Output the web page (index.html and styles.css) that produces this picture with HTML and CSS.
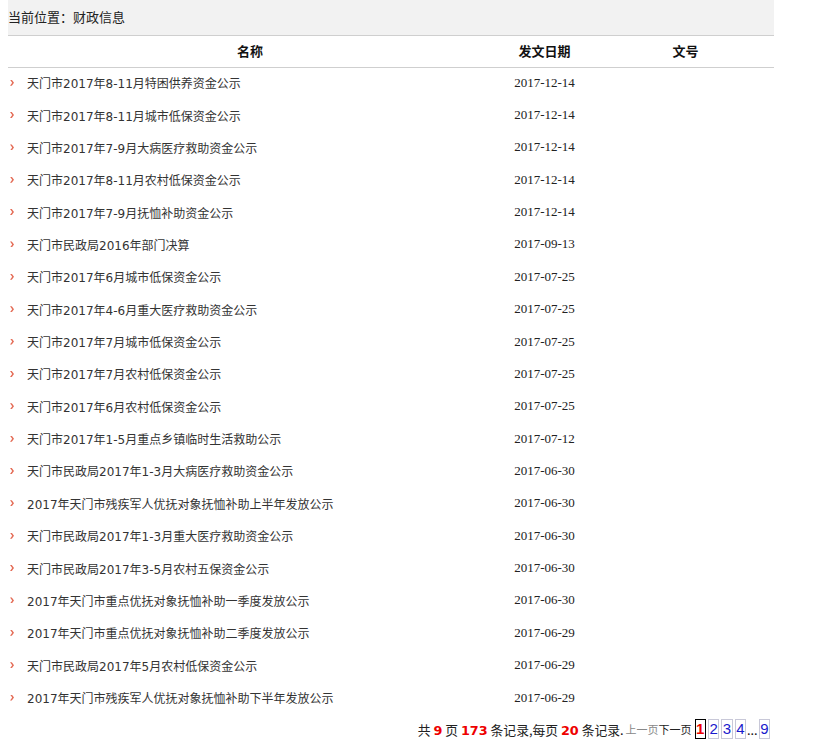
FILE: index.html
```html
<!DOCTYPE html>
<html lang="zh-CN">
<head>
<meta charset="utf-8">
<title>财政信息</title>
<link rel="stylesheet" href="styles.css">
</head>
<body>
<div class="wrap">
  <div class="crumb">当前位置：财政信息</div>
  <div class="thead">
    <div class="c-name">名称</div>
    <div class="c-date">发文日期</div>
    <div class="c-num">文号</div>
  </div>
  <ul class="list">
    <li><span class="t"><i class="arr"></i>天门市2017年8-11月特困供养资金公示</span><span class="d">2017-12-14</span><span class="n"></span></li>
    <li><span class="t"><i class="arr"></i>天门市2017年8-11月城市低保资金公示</span><span class="d">2017-12-14</span><span class="n"></span></li>
    <li><span class="t"><i class="arr"></i>天门市2017年7-9月大病医疗救助资金公示</span><span class="d">2017-12-14</span><span class="n"></span></li>
    <li><span class="t"><i class="arr"></i>天门市2017年8-11月农村低保资金公示</span><span class="d">2017-12-14</span><span class="n"></span></li>
    <li><span class="t"><i class="arr"></i>天门市2017年7-9月抚恤补助资金公示</span><span class="d">2017-12-14</span><span class="n"></span></li>
    <li><span class="t"><i class="arr"></i>天门市民政局2016年部门决算</span><span class="d">2017-09-13</span><span class="n"></span></li>
    <li><span class="t"><i class="arr"></i>天门市2017年6月城市低保资金公示</span><span class="d">2017-07-25</span><span class="n"></span></li>
    <li><span class="t"><i class="arr"></i>天门市2017年4-6月重大医疗救助资金公示</span><span class="d">2017-07-25</span><span class="n"></span></li>
    <li><span class="t"><i class="arr"></i>天门市2017年7月城市低保资金公示</span><span class="d">2017-07-25</span><span class="n"></span></li>
    <li><span class="t"><i class="arr"></i>天门市2017年7月农村低保资金公示</span><span class="d">2017-07-25</span><span class="n"></span></li>
    <li><span class="t"><i class="arr"></i>天门市2017年6月农村低保资金公示</span><span class="d">2017-07-25</span><span class="n"></span></li>
    <li><span class="t"><i class="arr"></i>天门市2017年1-5月重点乡镇临时生活救助公示</span><span class="d">2017-07-12</span><span class="n"></span></li>
    <li><span class="t"><i class="arr"></i>天门市民政局2017年1-3月大病医疗救助资金公示</span><span class="d">2017-06-30</span><span class="n"></span></li>
    <li><span class="t"><i class="arr"></i>2017年天门市残疾军人优抚对象抚恤补助上半年发放公示</span><span class="d">2017-06-30</span><span class="n"></span></li>
    <li><span class="t"><i class="arr"></i>天门市民政局2017年1-3月重大医疗救助资金公示</span><span class="d">2017-06-30</span><span class="n"></span></li>
    <li><span class="t"><i class="arr"></i>天门市民政局2017年3-5月农村五保资金公示</span><span class="d">2017-06-30</span><span class="n"></span></li>
    <li><span class="t"><i class="arr"></i>2017年天门市重点优抚对象抚恤补助一季度发放公示</span><span class="d">2017-06-30</span><span class="n"></span></li>
    <li><span class="t"><i class="arr"></i>2017年天门市重点优抚对象抚恤补助二季度发放公示</span><span class="d">2017-06-29</span><span class="n"></span></li>
    <li><span class="t"><i class="arr"></i>天门市民政局2017年5月农村低保资金公示</span><span class="d">2017-06-29</span><span class="n"></span></li>
    <li><span class="t"><i class="arr"></i>2017年天门市残疾军人优抚对象抚恤补助下半年发放公示</span><span class="d">2017-06-29</span><span class="n"></span></li>
  </ul>
  <div class="pager">
    <span>共 <b>9</b> 页 <b>173</b> 条记录,每页 <b>20</b> 条记录.</span><span class="prev">上一页</span><span class="next">下一页</span><span class="pg cur">1</span><span class="pg">2</span><span class="pg">3</span><span class="pg">4</span><span class="dots">...</span><span class="pg">9</span>
  </div>
</div>
</body>
</html>
```

FILE: styles.css
```css
html, body {
  margin: 0;
  padding: 0;
  background: #fff;
}
body {
  font-family: "DejaVu Sans", "Noto Sans CJK SC", sans-serif;
  font-size: 12px;
  color: #333;
}
.wrap {
  margin-left: 8px;
  width: 766px;
}
.crumb {
  height: 35px;
  line-height: 33px;
  background: #f2f2f2;
  border-bottom: 1px solid #cfcfcf;
  font-family: "Noto Sans CJK SC", sans-serif;
  font-size: 13px;
  color: #222;
}
.thead {
  display: flex;
  height: 31px;
  line-height: 30px;
  border-bottom: 1px solid #cfcfcf;
  font-family: "Noto Sans CJK SC", sans-serif;
  font-weight: bold;
  font-size: 13px;
  color: #111;
  text-align: center;
}
.c-name { width: 484px; }
.c-date { width: 105px; }
.c-num { width: 177px; }
.list {
  list-style: none;
  margin: 0;
  padding: 0;
}
.list li {
  display: flex;
  align-items: center;
  box-sizing: border-box;
  height: 32.37px;
  padding-bottom: 3px;
}
.t {
  width: 484px;
  display: flex;
  align-items: center;
  color: #333;
  white-space: nowrap;
}
.arr {
  width: 4px;
  height: 6px;
  margin: 0 13px 0 2px;
  background: #e46d57;
  clip-path: polygon(0 0, 45% 0, 100% 50%, 45% 100%, 0 100%, 55% 50%);
}
.d {
  width: 105px;
  text-align: center;
  font-family: "Liberation Serif", serif;
  font-size: 13px;
  color: #222;
}
.n { width: 177px; }
.pager {
  display: flex;
  justify-content: flex-end;
  align-items: center;
  height: 28px;
  padding-right: 4px;
  font-family: "Noto Sans CJK SC", sans-serif;
  font-size: 12.8px;
  color: #222;
}
.pager b {
  color: #e00;
  font-family: "DejaVu Sans", sans-serif;
  font-weight: bold;
}
.prev {
  color: #888;
  font-size: 11px;
  margin-left: 2px;
}
.next {
  color: #222;
  font-size: 11px;
  margin-right: 3px;
}
.pg {
  display: inline-block;
  height: 18px;
  line-height: 18px;
  padding: 0 0.5px;
  margin-left: 2px;
  border: 1px solid #c8c8d8;
  color: #1a1acc;
  font-family: "Liberation Sans", sans-serif;
  font-size: 15px;
}
.pg.cur {
  margin-left: 0;
  border: 1px solid #000;
  color: #e00;
  font-weight: bold;
}
.dots {
  margin-left: 1px;
  margin-right: -1px;
  color: #222;
}
```
